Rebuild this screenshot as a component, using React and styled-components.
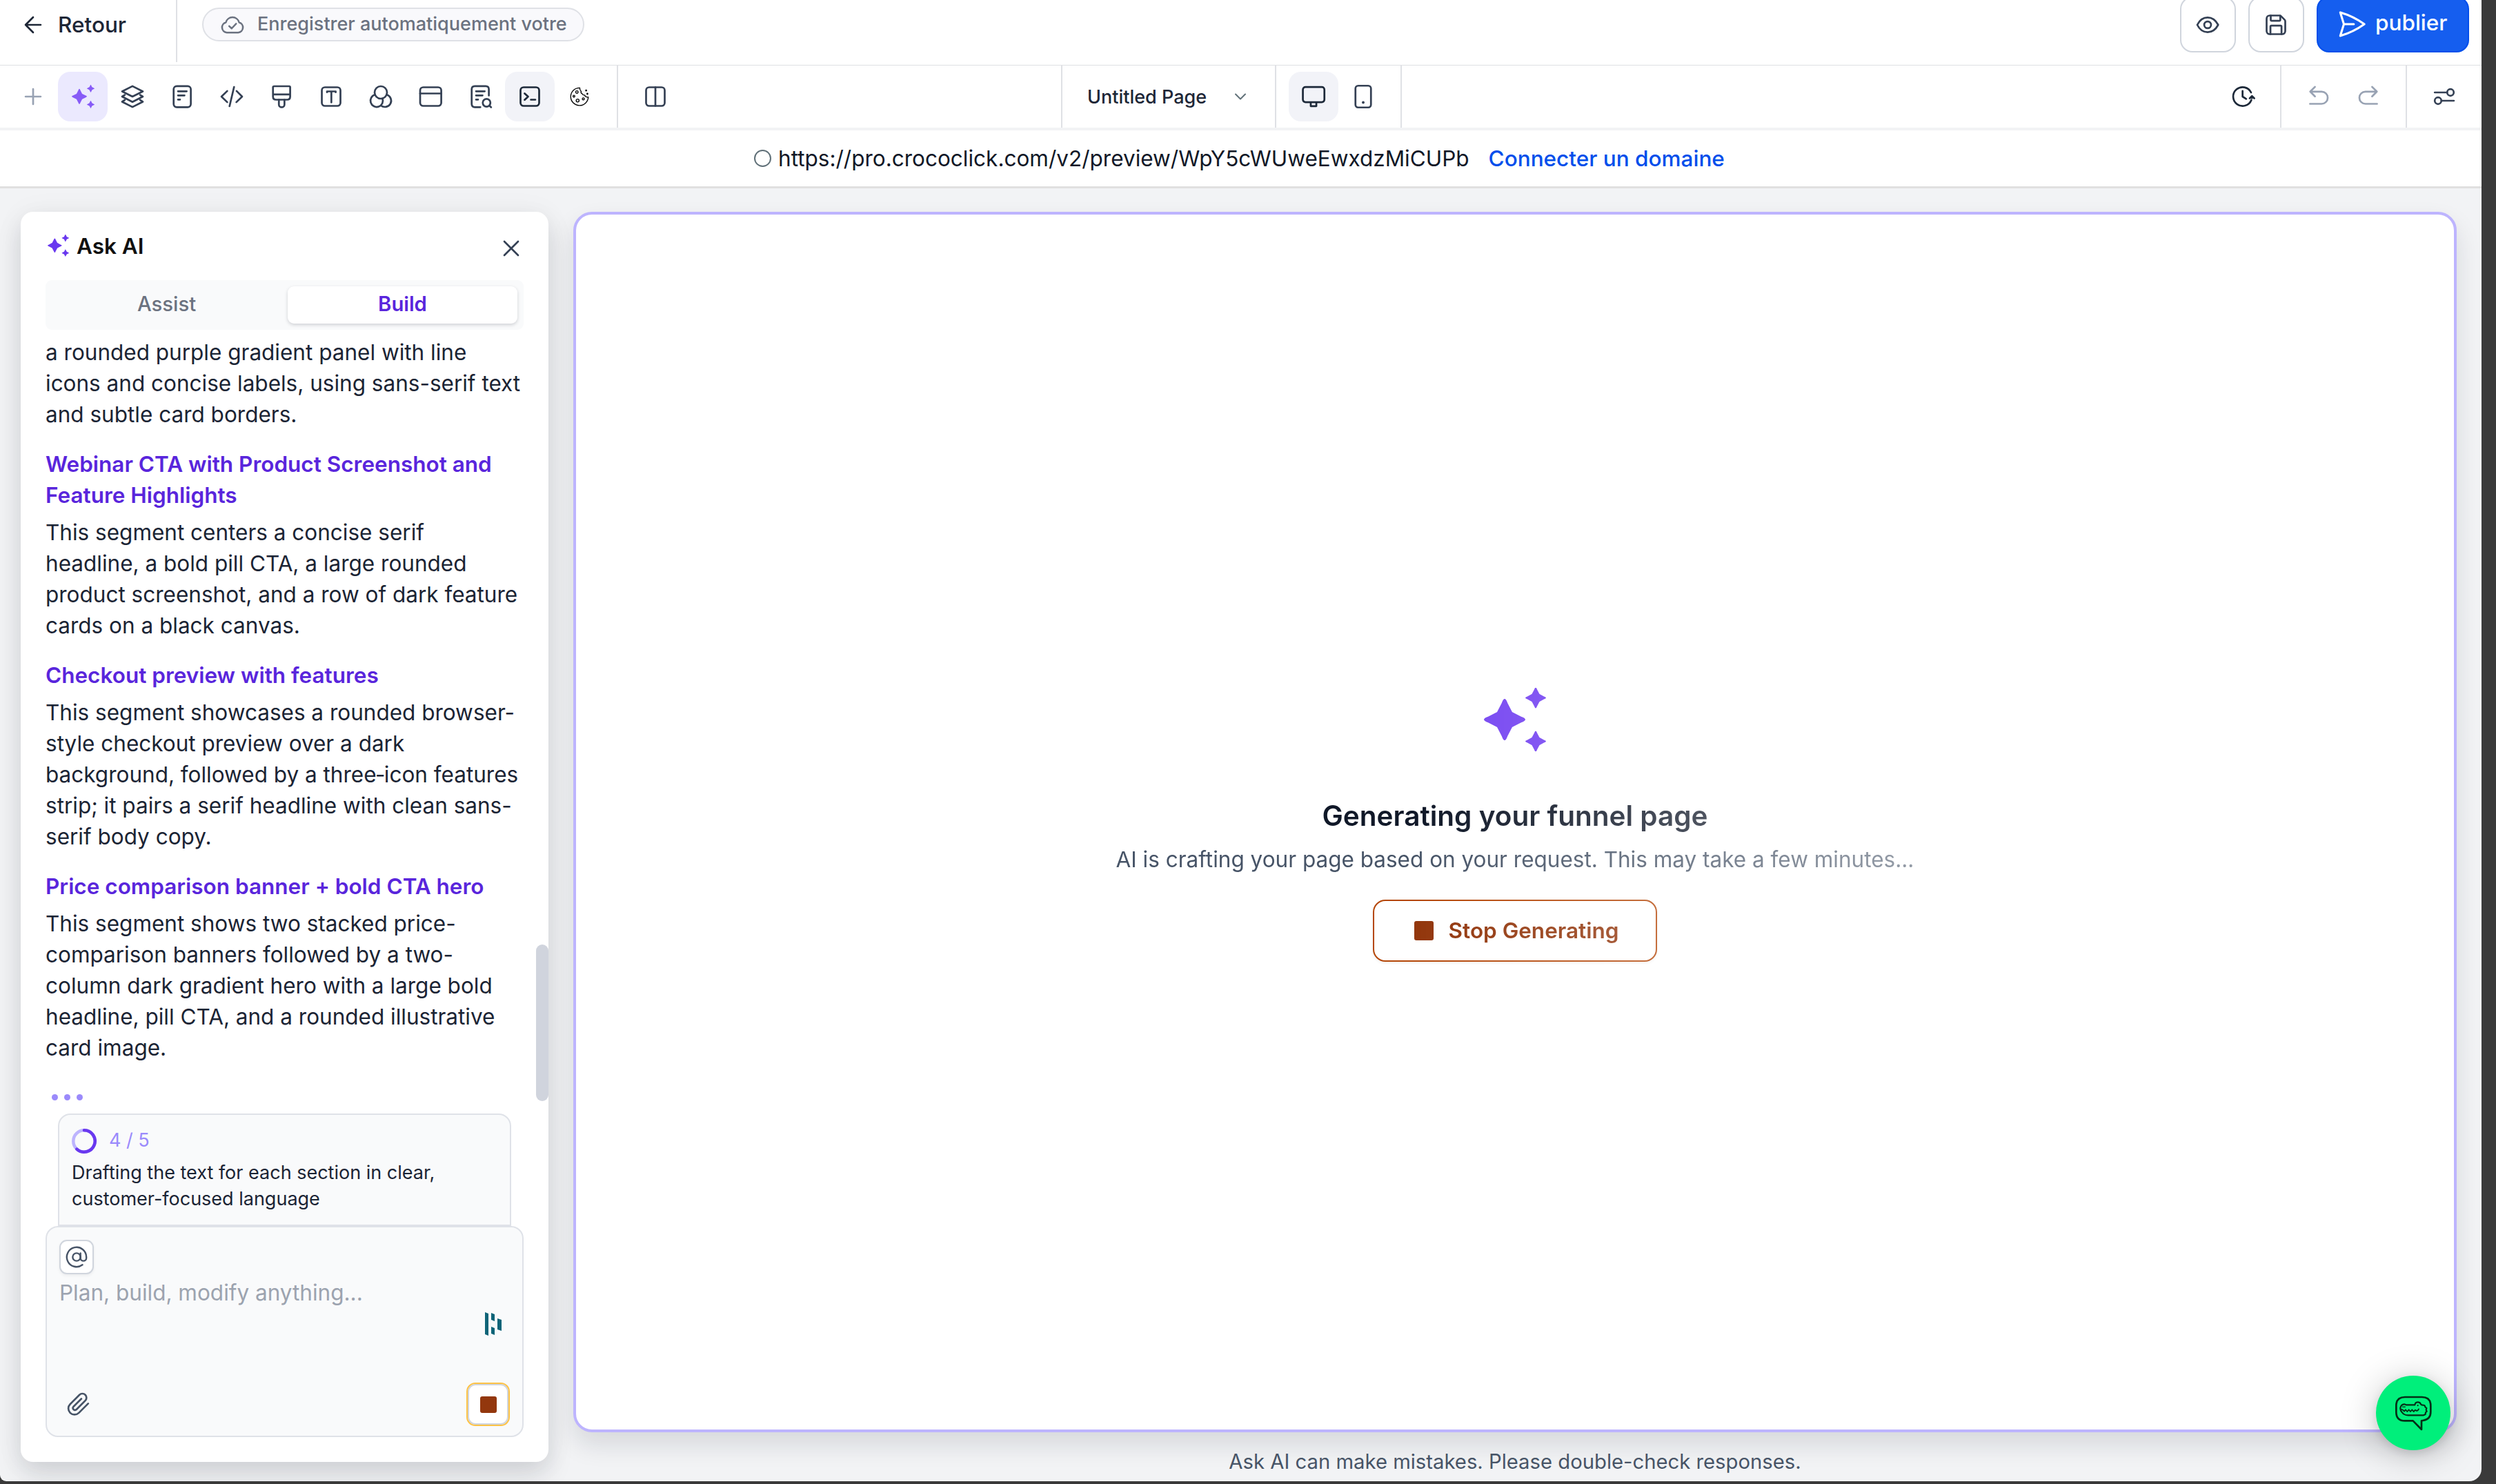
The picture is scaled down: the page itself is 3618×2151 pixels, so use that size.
import styled, { createGlobalStyle, css } from "styled-components"

const GlobalStyle = createGlobalStyle`
  * { box-sizing: border-box; }
  body {
    margin: 0;
    background: #3a3a3a;
    font-family: Inter, "Liberation Sans", sans-serif;
    font-size: 31.5px;
    line-height: 45px;
    color: #1f2937;
  }
  h2, h3, p { margin: 0; font-weight: 400; }
  button { font: inherit; color: inherit; padding: 0; }
`

const Window = styled.div`
  width: 3597px;
  height: 2147px;
  display: flex;
  flex-direction: column;
  background: #f2f3f5;
  border-radius: 0 0 18px 9px;
  overflow: hidden;
  position: relative;
`

/* top header */
const Header = styled.header`
  height: 95px;
  display: flex;
  justify-content: space-between;
  background: #fff;
  border-bottom: 1px solid #dfe0e3;
`

const HeaderLeft = styled.div`
  display: flex;
  align-items: flex-start;
`

const BackLink = styled.div`
  width: 257px;
  height: 90px;
  padding: 13px 0 0 30px;
  display: flex;
  align-items: flex-start;
  gap: 18px;
  border-right: 2px solid #dfe1e5;
  color: #1d2636;
  font-weight: 500;

  svg { margin-top: 5px; }
`

const SavePill = styled.div`
  height: 49px;
  width: 554px;
  margin: 11px 0 0 36px;
  padding-left: 24px;
  display: flex;
  align-items: center;
  gap: 18px;
  border: 2px solid #dfe1e6;
  border-radius: 25px;
  background: #f9f9fc;
  color: #6b7280;
  font-size: 27px;
  font-weight: 500;
  white-space: nowrap;

  span { position: relative; top: -1px; }
`

const HeaderRight = styled.div`
  display: flex;
  gap: 18px;
  margin-top: -5px;
  padding-right: 18px;
`

const SquareButton = styled.button`
  width: 81px;
  height: 81px;
  display: flex;
  align-items: center;
  justify-content: center;
  padding-right: 1px;
  background: #fff;
  border: 2px solid #d0d5dd;
  border-radius: 18px;
  color: #344054;
`

const PublishButton = styled.button`
  width: 221px;
  height: 81px;
  display: flex;
  align-items: center;
  padding-left: 26px;
  gap: 11px;
  background: #155eef;
  border: 2px solid #004eeb;
  border-radius: 18px;
  color: #fff;
  font-weight: 500;

  span { position: relative; top: -3px; }
  svg { position: relative; top: -1px; }
`

/* icon toolbar */
const Toolbar = styled.div`
  height: 94px;
  display: flex;
  justify-content: space-between;
  background: #fff;
  border-bottom: 4px solid #f2f3f5;
`

const ToolGroup = styled.div`
  display: flex;
  align-items: center;
  width: ${props => props.$width}px;
  padding-left: ${props => props.$pad || 0}px;
  ${props => props.$line && css`border-left: 2px solid #dfe1e5;`}
`

const ToolSection = styled.div`
  display: flex;
`

const ToolButton = styled.button`
  width: 72px;
  height: 72px;
  flex: none;
  display: flex;
  align-items: center;
  justify-content: center;
  border: 0;
  border-radius: 18px;
  background: ${props => props.$bg || "transparent"};
  color: ${props => props.$color || "#344054"};
`

const PageSelect = styled.div`
  display: flex;
  width: 100%;
  align-items: center;
  justify-content: space-between;
  padding-right: 38px;
  font-size: 27px;
  font-weight: 500;
  color: #1d2636;

  svg { color: #607078; }
`

/* address row */
const UrlBar = styled.div`
  height: 84px;
  padding: 0 0 1px 1093px;
  display: flex;
  align-items: center;
  background: #fff;
  border-bottom: 3px solid #e0e0e0;
  color: #111827;
`

const UrlDot = styled.span`
  width: 25px;
  height: 25px;
  margin-right: 10px;
  border: 2px solid #607078;
  border-radius: 50%;
`

const DomainLink = styled.a`
  margin-left: 28px;
  color: #004eeb;
  font-weight: 500;
`

const Main = styled.main`
  flex: 1;
  display: flex;
  padding: 34px 36px 0 30px;
  gap: 36px;
`

/* Ask AI side panel */
const Panel = styled.aside`
  width: 765px;
  height: 1812px;
  padding: 0 36px;
  display: flex;
  flex-direction: column;
  position: relative;
  background: #fff;
  border-radius: 18px;
  box-shadow: 0 18px 36px rgba(16, 24, 40, 0.13), 0 4px 45px rgba(16, 24, 40, 0.05);
`

const PanelHead = styled.div`
  height: 99px;
  padding: 27px 2px 0 3px;
  display: flex;
  align-items: flex-start;
  gap: 11px;
  color: #101010;
  font-weight: 600;

  svg { margin-top: 6px; }
  svg:last-child { margin: 10px 0 0 auto; color: #344054; }
`

const Tabs = styled.div`
  height: 72px;
  padding: 9px;
  display: flex;
  gap: 9px;
  background: #f9fafb;
  border-radius: 9px;
`

const Tab = styled.div`
  flex: 1;
  height: 54px;
  line-height: 51px;
  text-align: center;
  border-radius: 9px;
  font-size: 29.25px;
  font-weight: ${props => props.$active ? 600 : 500};
  color: ${props => props.$active ? "#5925dc" : "#6b7280"};
  ${props => props.$active && css`
    background: #fff;
    box-shadow: 0 2px 5px rgba(16, 24, 40, 0.18);
  `}
`

const Messages = styled.div`
  height: 1129px;
  padding-top: 10px;
  margin-right: -10px;
  overflow: hidden;

  p { color: #1b2434; white-space: nowrap; }
  h3 {
    margin: 27px 0 9px;
    font-size: 31.5px;
    font-weight: 600;
    color: #5925dc;
    white-space: nowrap;
  }
`

const Dots = styled.div`
  display: flex;
  gap: 9px;
  padding: 45px 0 0 9px;

  i {
    width: 9px;
    height: 9px;
    border-radius: 50%;
    background: #9b8afb;
  }
`

const ScrollThumb = styled.div`
  position: absolute;
  right: 0;
  top: 1062px;
  width: 18px;
  height: 227px;
  border-radius: 9px;
  background: #d0d4dd;
`

const StatusCard = styled.div`
  height: 163px;
  margin: 7px 18px 0;
  padding: 18px 18px 0;
  background: #f9fafb;
  border: 2px solid #dfe2e8;
  border-radius: 18px 18px 0 0;
  font-size: 27px;
  line-height: 38px;
  color: #1b2434;
`

const StepCount = styled.div`
  display: flex;
  align-items: center;
  gap: 18px;
  height: 39px;
  margin-bottom: 8px;
  color: #9b8afb;

  span { position: relative; top: -1px; }
`

const Composer = styled.div`
  height: 306px;
  padding: 18px 18px 14px;
  display: flex;
  flex-direction: column;
  background: #f9fafb;
  border: 2px solid #dfe2e8;
  border-radius: 18px;
`

const MentionButton = styled.button`
  width: 50px;
  height: 50px;
  display: flex;
  align-items: center;
  justify-content: center;
  background: #fff;
  border: 2px solid #d0d5dd;
  border-radius: 11px;
  box-shadow: 0 2px 4px rgba(16, 24, 40, 0.06);
  color: #475467;
`

const Placeholder = styled.div`
  margin-top: 4px;
  color: #9ca3af;
`

const BrandRow = styled.div`
  display: flex;
  justify-content: flex-end;
  margin-top: 6px;
  padding-right: 11px;
`

const ComposerFoot = styled.div`
  margin-top: auto;
  display: flex;
  align-items: center;
  justify-content: space-between;
  padding-left: 10px;
  color: #475467;
`

const StopSmall = styled.button`
  width: 63px;
  height: 63px;
  display: flex;
  align-items: center;
  justify-content: center;
  background: #fff;
  border: 2px solid #fdc245;
  border-radius: 13px;
  box-shadow: inset 0 0 0 2px #d0d5dd;
`

const StopMark = styled.span`
  width: ${props => props.$size}px;
  height: ${props => props.$size}px;
  border-radius: 3px;
  background: #93370d;
`

/* preview canvas */
const CanvasColumn = styled.section`
  flex: 1;
  display: flex;
  flex-direction: column;
  align-items: center;
`

const Canvas = styled.div`
  width: 2730px;
  height: 1769px;
  display: flex;
  justify-content: center;
  align-items: flex-start;
  background: #fff;
  border: 4px solid #bdb4fe;
  border-radius: 27px;
  box-shadow: 0 18px 36px rgba(16, 24, 40, 0.12);
`

const Generating = styled.div`
  margin-top: 686px;
  display: flex;
  flex-direction: column;
  align-items: center;
  mask-image: linear-gradient(90deg, #000 38%, rgba(0, 0, 0, 0.74) 74%, rgba(0, 0, 0, 0.58));

  h2 {
    margin-top: 67px;
    font-size: 40.5px;
    line-height: 54px;
    font-weight: 600;
    color: #101828;
  }
  p { margin-top: 13px; color: #475467; }
`

const StopButton = styled.button`
  width: 412px;
  height: 90px;
  margin: 36px 0 6px;
  padding: 0 0 1px 4px;
  display: flex;
  align-items: center;
  justify-content: center;
  gap: 22px;
  background: #fff;
  border: 2px solid #b54708;
  border-radius: 18px;
  box-shadow: 0 2px 4px rgba(16, 24, 40, 0.06);
  color: #93370d;
  font-weight: 600;
`

const Disclaimer = styled.p`
  margin-top: 20px;
  font-size: 29.25px;
  color: #475467;
`

const ChatButton = styled.button`
  position: absolute;
  right: 45px;
  bottom: 45px;
  width: 108px;
  height: 108px;
  display: flex;
  align-items: center;
  justify-content: center;
  border: 0;
  border-radius: 50%;
  background: #00ef7b;
  box-shadow: 0 6px 54px rgba(0, 0, 0, 0.22), 0 4px 14px rgba(0, 0, 0, 0.1);
`

const Icon = ({ size = 36, stroke = 1.8, children }) => (
  <svg width={size} height={size} viewBox="0 0 24 24" fill="none" stroke="currentColor"
    strokeWidth={stroke} strokeLinecap="round" strokeLinejoin="round">
    {children}
  </svg>
)

// four pointed star with slightly rounded tips
const star = (x, y, r) => {
  const a = r * 0.14
  const b = r * 0.8
  const c = r * 0.36
  return `M${x - a} ${y - b}Q${x} ${y - r * 1.2} ${x + a} ${y - b}`
    + `L${x + c} ${y - c * 1.05}Q${x + c} ${y - c} ${x + c * 1.05} ${y - c}`
    + `L${x + b} ${y - a}Q${x + r * 1.2} ${y} ${x + b} ${y + a}`
    + `L${x + c * 1.05} ${y + c}Q${x + c} ${y + c} ${x + c} ${y + c * 1.05}`
    + `L${x + a} ${y + b}Q${x} ${y + r * 1.2} ${x - a} ${y + b}`
    + `L${x - c} ${y + c * 1.05}Q${x - c} ${y + c} ${x - c * 1.05} ${y + c}`
    + `L${x - b} ${y + a}Q${x - r * 1.2} ${y} ${x - b} ${y - a}`
    + `L${x - c * 1.05} ${y - c}Q${x - c} ${y - c} ${x - c} ${y - c * 1.05}Z`
}

const Sparkles = ({ width, color }) => (
  <svg width={width} height={width * 92 / 90} viewBox="0 0 90 92" fill={color}>
    <path d={star(30, 46, 30)} />
    <path d={star(75, 14.5, 15)} />
    <path d={star(75, 77.5, 15)} />
  </svg>
)

const tools = [
  { id: "add", color: "#98a2b3", icon: <path d="M12 4.7v14.6M4.7 12h14.6" /> },
  { id: "ai", bg: "#ebe9fe", sparkles: true },
  { id: "layers", icon: <path d="M12 1.9 2 7l10 5 10-5zM4.6 10.4 2 12l10 5.2L22 12l-2.6-1.6M4.6 15.3 2 17l10 5.1L22 17l-2.6-1.7" /> },
  { id: "page", icon: <><rect x="3.8" y="1.9" width="16.6" height="20.3" rx="3" /><path d="M8 6.9h8.4M8 10.9h6.3M8 14.9h2" /></> },
  { id: "code", icon: <path d="m14.2 2.7-4.4 18.6M7.6 6.6 2 12l5.6 5.4M16.6 6.6 22 12l-5.6 5.4" /> },
  { id: "brush", icon: <><path d="M5 2h14.4q1 0 1 1v9q0 3-3 3H6.8q-3 0-3-3V3q0-1 1.2-1zM3.8 9.9h16.6" /><path d="M9.5 15v4.6a2.7 2.7 0 0 0 5.4 0V15" /></> },
  { id: "type", icon: <><rect x="3" y="3" width="18" height="18" rx="3" /><path d="M8 7.8V7h8.4v.8M12.2 7v10.6" /></> },
  { id: "colors", icon: <><circle cx="12" cy="8" r="6" /><path d="M6.42 10.21A6 6 0 1 0 13.58 13.79M17.58 10.21A6 6 0 1 1 12 20.47" /></> },
  { id: "popup", icon: <><rect x="2" y="3" width="20.4" height="18" rx="3" /><path d="M2 9h20.4" /></> },
  { id: "seo", icon: <><path d="M20.4 11V5q0-3.1-3-3.1H6.8q-3 0-3 3.1v14q0 3.2 3 3.2h5.4M8 6.9h8.4M8 10.9h6.3M8 14.9h2" /><circle cx="18.2" cy="18" r="3.7" /><path d="m21 20.8 1.6 1.5" /></> },
  { id: "console", bg: "#f2f3f8", color: "#1d2939", icon: <><rect x="3" y="3" width="18" height="18" rx="3" /><path d="m7 9 3.3 3L7 15.2M13 15h4.3" /></> },
  {
    id: "cookie", color: "#000", stroke: 0.9,
    icon: <>
      <path d="M12.3 3.6A8.5 8.5 0 1 0 20.5 12.4q-1 .5-1.8-.3-1.4.2-1.5-1.5-2 .2-2.4-1.2-1.8-.7-1.2-2.4-1.6-1.4-1.3-3.4z" />
      <circle cx="9.5" cy="7.6" r="1.2" /><circle cx="6.6" cy="11.6" r=".9" /><circle cx="10.2" cy="15.8" r="1.4" /><circle cx="15.7" cy="14.2" r="1" />
      <path d="M18.4 6v.1M19.6 9.3v.1" strokeWidth="1.8" />
    </>
  },
]

const messages = [
  { lines: ["a rounded purple gradient panel with line", "icons and concise labels, using sans-serif text", "and subtle card borders."] },
  {
    title: ["Webinar CTA with Product Screenshot and", "Feature Highlights"],
    lines: ["This segment centers a concise serif", "headline, a bold pill CTA, a large rounded", "product screenshot, and a row of dark feature", "cards on a black canvas."]
  },
  {
    title: ["Checkout preview with features"],
    lines: ["This segment showcases a rounded browser-", "style checkout preview over a dark", "background, followed by a three\u2011icon features", "strip; it pairs a serif headline with clean sans-", "serif body copy."]
  },
  {
    title: ["Price comparison banner + bold CTA hero"],
    lines: ["This segment shows two stacked price-", "comparison banners followed by a two-", "column dark gradient hero with a large bold", "headline, pill CTA, and a rounded illustrative", "card image."]
  },
]

const Line = ({ text }) => <>{text}<br /></>

const TopBar = () => (
  <Header>
    <HeaderLeft>
      <BackLink>
        <Icon><path d="M19.3 12H4.7M12 19.3 4.7 12 12 4.7" /></Icon>
        Retour
      </BackLink>
      <SavePill>
        <Icon stroke={1.7}>
          <path d="M6.5 19.5a5 5 0 0 1-.9-9.8 6.6 6.6 0 0 1 12.8 0 5 5 0 0 1-.9 9.8zM8.8 13.2l2.4 2.3 4.3-4.6" />
        </Icon>
        <span>Enregistrer automatiquement votre</span>
      </SavePill>
    </HeaderLeft>
    <HeaderRight>
      <SquareButton>
        <Icon><path d="M2 12C4.3 7.3 7.9 4.9 12 4.9S19.7 7.3 22.2 12c-2.5 4.7-6.1 7.1-10.2 7.1S4.3 16.7 2 12z" /><circle cx="12" cy="12" r="3.3" /></Icon>
      </SquareButton>
      <SquareButton>
        <Icon>
          <path d="M6 3h9.5a2 2 0 0 1 1.4.6l3.5 3.5a2 2 0 0 1 .6 1.4V18a3 3 0 0 1-3 3H6a3 3 0 0 1-3-3V6a3 3 0 0 1 3-3z" />
          <path d="M7 3v4.2q0 .9.9.9h7.4q.9 0 .9-.9V3.2M6.7 21v-7.2q0-1 1-1h8.7q1 0 1 1V21" />
        </Icon>
      </SquareButton>
      <PublishButton>
        <Icon size={46} stroke={1.6}>
          <path d="M6 12 3.269 3.125A59.769 59.769 0 0 1 21.485 12 59.768 59.768 0 0 1 3.27 20.875L6 12Zm0 0h7.5" />
        </Icon>
        <span>publier</span>
      </PublishButton>
    </HeaderRight>
  </Header>
)

const ToolRow = () => (
  <Toolbar>
    <ToolSection>
      <ToolGroup $width={894} $pad={12}>
        {tools.map(tool => (
          <ToolButton key={tool.id} $bg={tool.bg} $color={tool.color}>
            {tool.sparkles ? <Sparkles width={33} color="#875bf7" /> : <Icon stroke={tool.stroke}>{tool.icon}</Icon>}
          </ToolButton>
        ))}
      </ToolGroup>
      <ToolGroup $width={644} $pad={18} $line>
        <ToolButton><Icon><rect x="3" y="3" width="18" height="18" rx="3" /><path d="M12 3v18" /></Icon></ToolButton>
      </ToolGroup>
      <ToolGroup $width={310} $pad={36} $line>
        <PageSelect>
          Untitled Page
          <Icon size={24} stroke={2}><path d="m5 8.5 7 7 7-7" /></Icon>
        </PageSelect>
      </ToolGroup>
      <ToolGroup $width={182} $pad={18} $line>
        <ToolButton $bg="#f2f3f8" $color="#1d2939">
          <Icon><rect x="1.7" y="2.8" width="20.8" height="14.6" rx="2.5" /><path d="M9.3 17.5v3.7h5.4v-3.7" /></Icon>
        </ToolButton>
        <ToolButton>
          <Icon><rect x="4.5" y="1.5" width="15" height="21" rx="2.6" /><path d="M12 17.6v.1" strokeWidth="2.6" /></Icon>
        </ToolButton>
      </ToolGroup>
      <ToolGroup $width={10} $line />
    </ToolSection>
    <ToolSection>
      <ToolGroup $width={89}>
        <ToolButton $color="#1d2939">
          <Icon><path d="M19.3 8A9.1 9.1 0 1 0 19.6 15.3M18 13.7l2.2-2.2 2.2 2.2M20.2 12v1.5M11.1 6.6V12l3.5 2.2" /></Icon>
        </ToolButton>
      </ToolGroup>
      <ToolGroup $width={182} $pad={18} $line>
        <ToolButton $color="#98a2b3">
          <Icon><path d="M8.4 2.6 3.8 7.2l4.6 4.6M4 7.2h10.8a5.9 5.9 0 0 1 0 11.8H3.6" /></Icon>
        </ToolButton>
        <ToolButton $color="#98a2b3">
          <Icon><path d="m15.6 2.6 4.6 4.6-4.6 4.6M20 7.2H9.2a5.9 5.9 0 0 0 0 11.8h11.2" /></Icon>
        </ToolButton>
      </ToolGroup>
      <ToolGroup $width={110} $pad={18} $line>
        <ToolButton>
          <Icon><path d="M2.8 8h12M9.3 16h12" /><circle cx="18" cy="8" r="3.2" /><circle cx="6" cy="16" r="3.2" /></Icon>
        </ToolButton>
      </ToolGroup>
    </ToolSection>
  </Toolbar>
)

const AskPanel = () => (
  <Panel>
    <PanelHead>
      <Sparkles width={31} color="#6938ef" />
      Ask AI
      <Icon size={32} stroke={2}><path d="m4.5 4.5 15 15M19.5 4.5l-15 15" /></Icon>
    </PanelHead>
    <Tabs>
      <Tab>Assist</Tab>
      <Tab $active>Build</Tab>
    </Tabs>
    <Messages>
      {messages.map((m, i) => (
        <div key={i}>
          {m.title && <h3>{m.title.map(t => <Line key={t} text={t} />)}</h3>}
          <p>{m.lines.map(t => <Line key={t} text={t} />)}</p>
        </div>
      ))}
      <Dots><i /><i /><i /></Dots>
    </Messages>
    <ScrollThumb />
    <StatusCard>
      <StepCount>
        <svg width="36" height="36" viewBox="0 0 36 36" fill="none" strokeWidth="4.5" strokeLinecap="round">
          <circle cx="18" cy="18" r="15.7" stroke="#bdb4fe" />
          <path d="M18 2.3A15.7 15.7 0 1 1 7.4 29.6" stroke="#6938ef" />
        </svg>
        <span>4 / 5</span>
      </StepCount>
      Drafting the text for each section in clear,<br />customer-focused language
    </StatusCard>
    <Composer>
      <MentionButton>
        <Icon size={34} stroke={1.7}><circle cx="12" cy="12" r="4" /><path d="M16 8v5a3 3 0 0 0 6 0v-1a10 10 0 1 0-4 8" /></Icon>
      </MentionButton>
      <Placeholder>Plan, build, modify anything...</Placeholder>
      <BrandRow>
        <svg width="25" height="34" viewBox="0 0 25 34" fill="#0e6478">
          <path d="M0 0l5 2v32l-5-2zM9 1l5 2v10l-5-2zM9 21l5 2v10l-5-2zM18 9l6 2v16l-6-2z" />
        </svg>
      </BrandRow>
      <ComposerFoot>
        <Icon><path d="m21.2 10.9-9 9a5.9 5.9 0 0 1-8.4-8.4l9-9a3.9 3.9 0 0 1 5.6 5.6l-8.7 8.7a2 2 0 0 1-2.8-2.8l7.7-7.7" /></Icon>
        <StopSmall><StopMark $size={24} /></StopSmall>
      </ComposerFoot>
    </Composer>
  </Panel>
)

const CrocIcon = () => (
  <svg width="53" height="51" viewBox="215 222 159 153" fill="none" stroke="#052e16" strokeWidth="8" strokeLinejoin="round" strokeLinecap="round">
    <path d="M257 228h74q38 0 38 38v26q0 34-34 38l-6 1v38l-37-38h-35q-38 0-38-38v-27q0-38 38-38z" />
    <path d="M262 262h38q2-12 13-12 10 0 13 9l4 3 12 2 4 8 5 4-2 8 3 6-5 5-1 8-8 4h-67q-18 0-27-13-8-8-7-19 3-15 17-16z" strokeWidth="6.5" />
    <path d="M239 281l9 3 6 6 6-7 7 8 7-8 7 8 7-8 7 8 7-7 6 4q6-1 9-8" strokeWidth="5.5" />
    <path d="M313 264v.5M249 271v.1M256 271v.1" strokeWidth="6" />
  </svg>
)

const App = () => {
  return (
    <>
      <GlobalStyle />
      <Window>
        <TopBar />
        <ToolRow />
        <UrlBar>
          <UrlDot />
          <span>https://pro.crococlick.com/v2/preview/WpY5cWUweEwxdzMiCUPb</span>
          <DomainLink>Connecter un domaine</DomainLink>
        </UrlBar>
        <Main>
          <AskPanel />
          <CanvasColumn>
            <Canvas>
              <Generating>
                <Sparkles width={90} color="#7443f1" />
                <h2>Generating your funnel page</h2>
                <p>AI is crafting your page based on your request. This may take a few minutes...</p>
                <StopButton><StopMark $size={28} />Stop Generating</StopButton>
              </Generating>
            </Canvas>
            <Disclaimer>Ask AI can make mistakes. Please double-check responses.</Disclaimer>
          </CanvasColumn>
        </Main>
        <ChatButton><CrocIcon /></ChatButton>
      </Window>
    </>
  )
}

export default App
